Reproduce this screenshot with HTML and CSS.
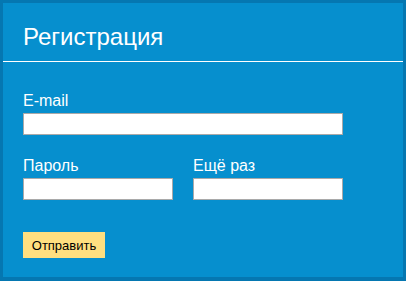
FILE: index.html
```html
<!DOCTYPE html>
<html lang="ru">
<head>
    <meta charset="UTF-8">
    <meta name="viewport" content="width=device-width, initial-scale=1.0">
    <title>Регистрация</title>
    <link rel="stylesheet" href="styles.css">
</head>
<body>
    <div class="reg-box">
        <div class="reg-header">Регистрация</div>
        <form class="reg-form">
            <div class="field">
                <label for="email">E-mail</label>
                <input type="text" id="email" class="input-wide">
            </div>
            <div class="row">
                <div class="field">
                    <label for="pass">Пароль</label>
                    <input type="password" id="pass" class="input-half">
                </div>
                <div class="field">
                    <label for="pass2">Ещё раз</label>
                    <input type="password" id="pass2" class="input-half">
                </div>
            </div>
            <button type="submit" class="send-btn">Отправить</button>
        </form>
    </div>
</body>
</html>
```

FILE: styles.css
```css
* { margin: 0; padding: 0; box-sizing: border-box; }
body { font-family: "Liberation Sans", Arial, sans-serif; background-color: #0577b1; }
.reg-box { width: 406px; height: 280px; border: 3px solid #0577b1; background-color: #068fce; color: #fff; }
.reg-header { padding: 20px 20px 10px; font-size: 24px; line-height: 28px; border-bottom: 1px solid #fff; }
.reg-form { padding: 30px 20px 0; }
.field label { display: block; font-size: 16px; line-height: 18px; margin-bottom: 3px; }
.field input { display: block; height: 22px; border: 1px solid #a9a9a9; background: #fff; }
.input-wide { width: 320px; }
.input-half { width: 150px; }
.row { display: flex; gap: 20px; margin-top: 22px; }
.send-btn { margin-top: 32px; width: 82px; height: 26px; border: none; background-color: #ffdf80; color: #000; font-family: inherit; font-size: 13px; cursor: pointer; }
```
